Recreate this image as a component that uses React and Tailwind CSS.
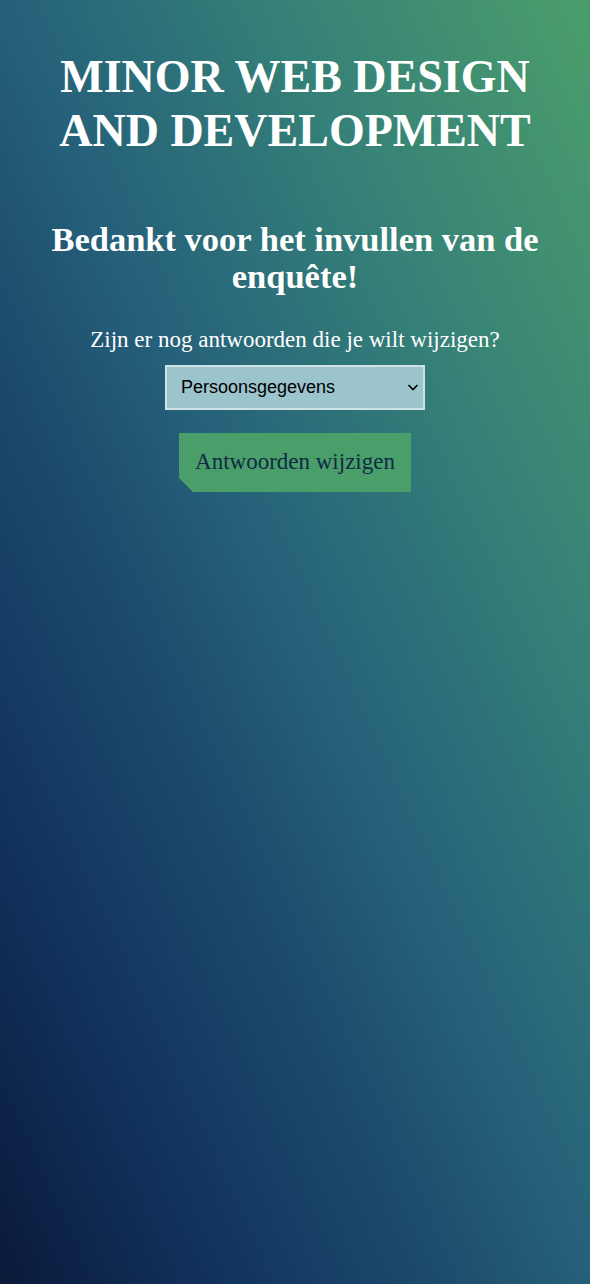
import React from 'react';

const App = () => {
  return (
    <div className="min-h-[1284px] w-full bg-[linear-gradient(to_top_right,#0a1a3a_0%,#123460_20%,#1d4b6b_37%,#25607a_50%,#358078_73%,#4b9e6b_100%)] text-white font-['Liberation_Serif',serif] text-center px-[30px] pt-[50px]">
      <h1 className="text-[46px] leading-[54px] font-bold">MINOR WEB DESIGN AND DEVELOPMENT</h1>

      <h2 className="mt-[63px] text-[34.5px] leading-[37px] font-bold">Bedankt voor het invullen van de enquête!</h2>

      <p className="mt-[32px] text-[23px] leading-[25px]">Zijn er nog antwoorden die je wilt wijzigen?</p>

      <div className="mt-[13px] flex justify-center">
        <div className="relative w-[260px] h-[45px]">
          <select
            defaultValue="persoonsgegevens"
            className="appearance-none w-full h-full bg-[#9bc4cc] border-2 border-[#cfe3e6] text-black text-[18px] font-['Liberation_Sans',sans-serif] pl-[14px] pr-[30px] text-left"
          >
            <option value="persoonsgegevens">Persoonsgegevens</option>
            <option value="studie">Studie</option>
            <option value="vakken">Vakken</option>
          </select>
          <svg className="absolute right-[6px] top-[16px] w-[12px] h-[12px] pointer-events-none" viewBox="0 0 12 12" fill="none" stroke="#000" strokeWidth="1.6">
            <path d="M1.5 4l4.5 4.5 4.5-4.5" />
          </svg>
        </div>
      </div>

      <div className="mt-[23px] flex justify-center">
        <button className="w-[232px] h-[59px] bg-[#4a9e6a] text-[#0f2a45] text-[23px] font-['Liberation_Serif',serif] [clip-path:polygon(0_0,100%_0,100%_100%,14px_100%,0_calc(100%-14px))]">
          Antwoorden wijzigen
        </button>
      </div>
    </div>
  );
};

export default App;
